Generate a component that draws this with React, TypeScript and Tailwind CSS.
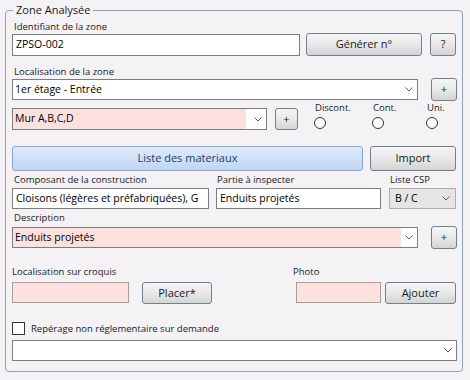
import type { ReactNode } from "react";

function Label({ children, className = "" }: { children: ReactNode; className?: string }) {
  return <div className={`text-[9.5px] leading-[12px] text-[#1a1a1a] ${className}`}>{children}</div>;
}

function Chevron() {
  return (
    <svg width="8" height="5" viewBox="0 0 8 5">
      <path d="M0.5 0.5 L4 4 L7.5 0.5" fill="none" stroke="#5a5a5a" strokeWidth="1" />
    </svg>
  );
}

function Btn({ children, className = "" }: { children?: ReactNode; className?: string }) {
  return (
    <button className={`flex items-center justify-center rounded-[3px] border border-[#71808f] bg-linear-to-b from-[#f5f5f5] via-[#e8e8e8] to-[#d4d4d4] text-[11px] text-[#1a1a1a] ${className}`}>
      {children}
    </button>
  );
}

function Input({ value = "", className = "" }: { value?: string; className?: string }) {
  return (
    <div className={`flex items-center overflow-hidden whitespace-nowrap border border-[#7d7d7d] px-[3px] text-[10.5px] text-black ${className}`}>
      {value}
    </div>
  );
}

function Combo({ value = "", fill = "bg-white", className = "", arrow = "w-[20px]" }: { value?: string; fill?: string; className?: string; arrow?: string }) {
  return (
    <div className={`flex border border-[#7d7d7d] bg-white ${className}`}>
      <div className={`flex flex-1 items-center px-[2px] text-[10.5px] text-black ${fill}`}>{value}</div>
      <div className={`flex items-center justify-end pr-[4px] ${arrow}`}>
        <Chevron />
      </div>
    </div>
  );
}

function Radio({ label, className = "" }: { label: string; className?: string }) {
  return (
    <div className={`flex flex-col items-start ${className}`}>
      <Label className="mt-px">{label}</Label>
      <div className="-ml-px mt-[3px] h-[12px] w-[12px] rounded-full border border-[#333] bg-white" />
    </div>
  );
}

export default function App() {
  return (
    <div className="h-[380px] w-[470px] bg-[#f4f2f5] pt-[2px] font-['Open_Sans',sans-serif]">
      <fieldset className="ml-[5px] w-[458px] rounded-[4px] border border-[#8da2b6] pb-[10px] pl-[6px] pr-[5px]">
        <legend className="ml-px px-[3px] text-[11px] leading-[16px] text-[#1a1a1a]">Zone Analysée</legend>

        <Label className="mt-[3px] pl-[2px]">Identifiant de la zone</Label>
        <div className="flex h-[23px] items-center">
          <Input value="ZPSO-002" className="h-[22px] w-[288px] bg-white" />
          <Btn className="ml-[6px] h-[23px] w-[116px]">Générer n°</Btn>
          <Btn className="ml-[8px] h-[23px] w-[26px]">?</Btn>
        </div>

        <Label className="mt-[10px] pl-[2px]">Localisation de la zone</Label>
        <div className="flex h-[23px] items-center">
          <Combo value="1er étage - Entrée" className="h-[21px] w-[406px]" />
          <Btn className="ml-auto h-[23px] w-[26px]">+</Btn>
        </div>

        <div className="flex items-start">
          <Combo value="Mur A,B,C,D" fill="bg-[#fde1de]" className="mt-[7px] h-[22px] w-[255px]" />
          <Btn className="ml-[8px] mt-[7px] h-[22px] w-[23px]">+</Btn>
          <Radio label="Discont." className="ml-[17px] w-[57px]" />
          <Radio label="Cont." className="w-[55px] pl-px" />
          <Radio label="Uni." />
        </div>

        <div className="mt-[16px] flex h-[25px]">
          <button className="flex w-[351px] items-center justify-center rounded-[3px] border border-[#8aa7cc] bg-linear-to-b from-[#e0ebfa] to-[#bfd6f2] text-[11px] text-[#233e69]">
            Liste des materiaux
          </button>
          <Btn className="ml-[7px] w-[86px]">Import</Btn>
        </div>

        <div className="mt-[3px] flex">
          <div className="flex w-[197px] flex-col">
            <Label className="pl-[2px]">Composant de la construction</Label>
            <Input value="Cloisons (légères et préfabriquées), G" className="mt-[2px] h-[21px] bg-white" />
          </div>
          <div className="ml-[7px] flex w-[165px] flex-col">
            <Label className="pl-px">Partie à inspecter</Label>
            <Input value="Enduits projetés" className="mt-[2px] h-[21px] bg-white" />
          </div>
          <div className="ml-[8px] flex w-[67px] flex-col">
            <Label className="pl-px">Liste CSP</Label>
            <div className="mt-[2px] flex h-[21px] items-center border border-[#acacac] bg-[#e5e5e5] pl-[5px] text-[10.5px] text-black">
              <span className="flex-1">B / C</span>
              <span className="flex pr-[5px]">
                <Chevron />
              </span>
            </div>
          </div>
        </div>

        <Label className="mt-[3px] pl-[2px]">Description</Label>
        <div className="mt-[2px] flex h-[23px] items-center">
          <Combo value="Enduits projetés" fill="bg-[#fde1de]" arrow="w-[16px]" className="h-[21px] w-[406px]" />
          <Btn className="ml-auto h-[23px] w-[26px]">+</Btn>
        </div>

        <div className="mt-[17px] flex">
          <Label className="w-[281px]">Localisation sur croquis</Label>
          <Label>Photo</Label>
        </div>
        <div className="mt-[4px] flex h-[22px] items-start">
          <div className="h-[21px] w-[117px] border border-[#a89c9c] bg-[#fde1de]" />
          <Btn className="ml-[13px] h-[22px] w-[70px]">Placer*</Btn>
          <div className="ml-[84px] h-[21px] w-[85px] border border-[#a89c9c] bg-[#fde1de]" />
          <Btn className="ml-[4px] h-[22px] w-[71px]">Ajouter</Btn>
        </div>

        <div className="mt-[18px] flex h-[13px] items-center">
          <div className="h-[13px] w-[13px] border border-[#333] bg-white" />
          <span className="ml-[6px] text-[9.5px] leading-[12px] text-[#1a1a1a]">Repérage non réglementaire sur demande</span>
        </div>

        <Combo className="mt-[5px] h-[21px] w-full" />
      </fieldset>
    </div>
  );
}
